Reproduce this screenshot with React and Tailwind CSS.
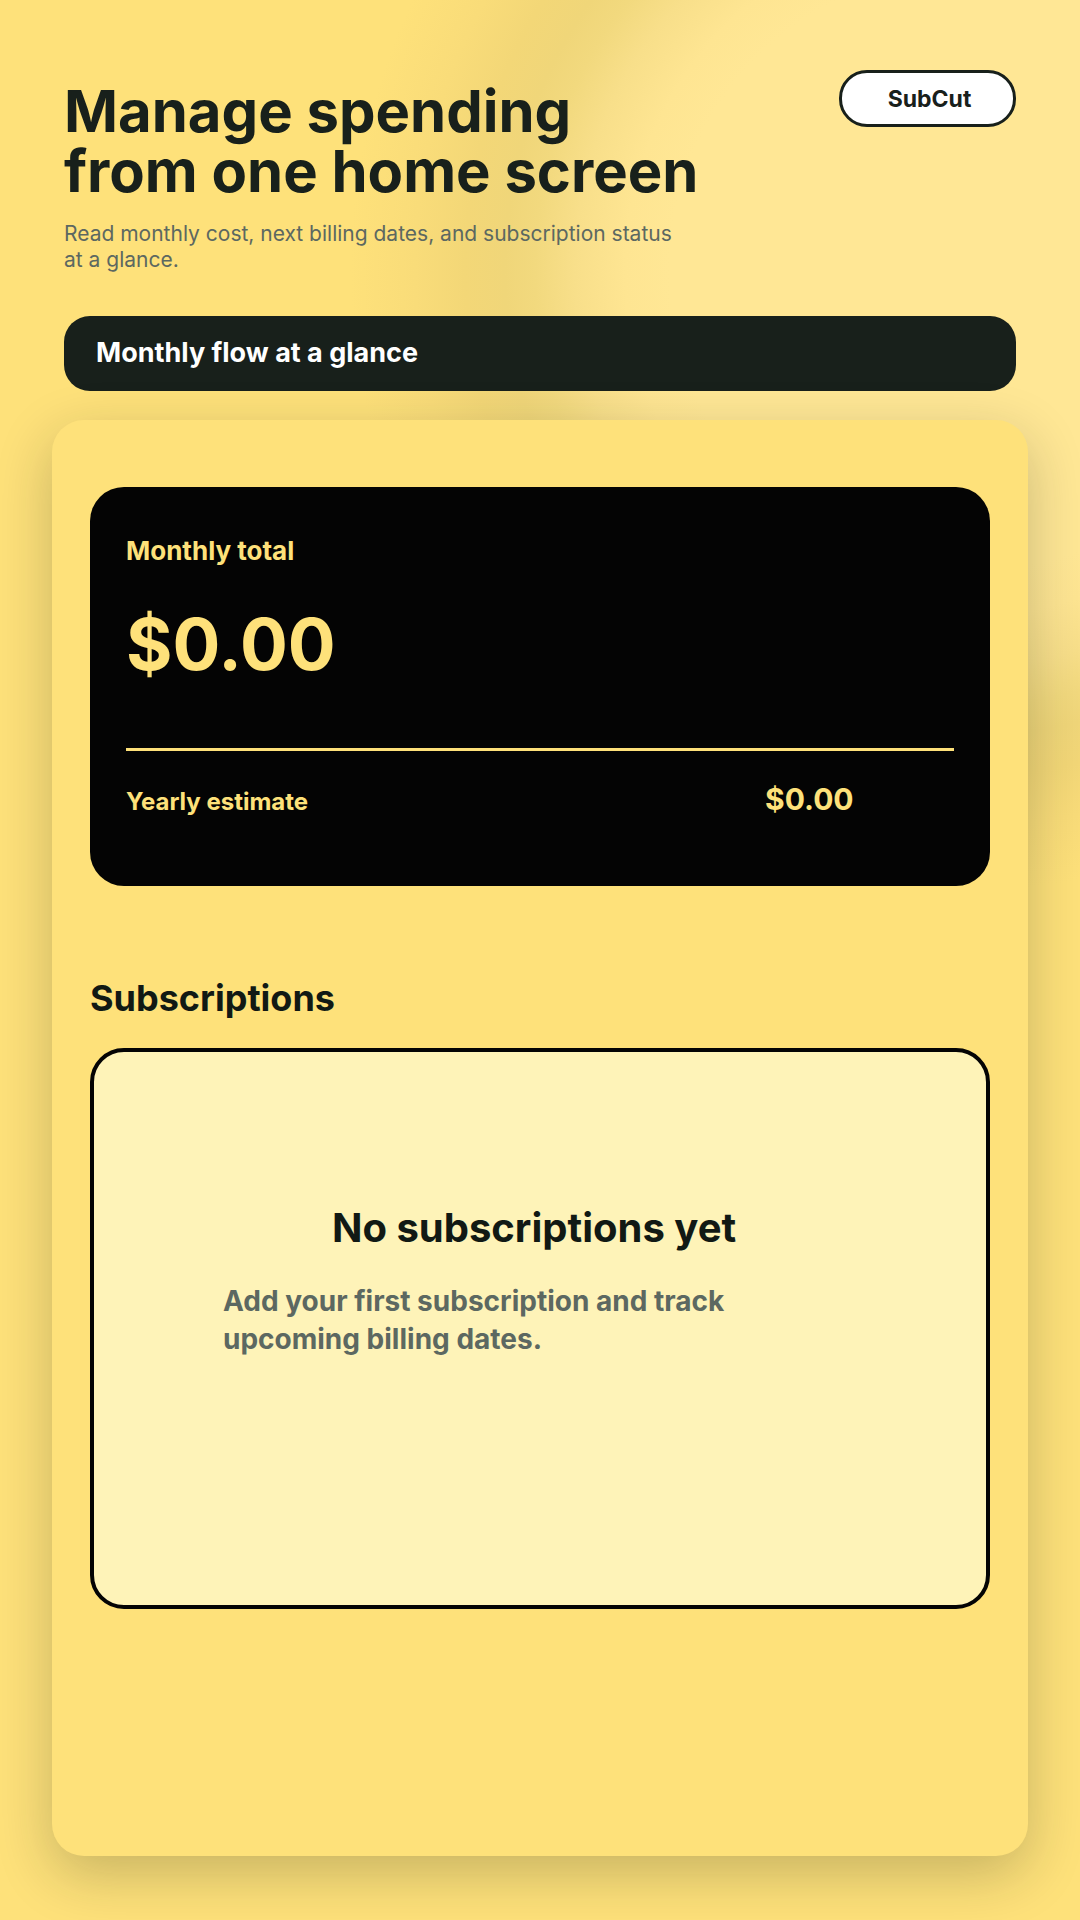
import React from "react";

const STATS = {
  monthly: "$0.00",
  yearly: "$0.00",
};

const Header = () => (
  <header className="flex items-start justify-between px-3">
    <div>
      <h1 className="pt-[11px] text-[58px] leading-[60px] font-bold">
        Manage spending
        <br />
        from one home screen
      </h1>
      <p className="mt-5 max-w-[620px] text-[21px] leading-[26px] text-[#5c6861]">
        Read monthly cost, next billing dates, and subscription status at a glance.
      </p>
    </div>
    <span className="flex h-[57px] w-[177px] shrink-0 items-center justify-center rounded-[28px] border-3 border-[#18201b] bg-white pt-0.5 pl-1 text-[23px] font-bold">
      SubCut
    </span>
  </header>
);

const TotalCard = () => (
  <section className="rounded-[34px] bg-[#040404] px-9 pt-12 pb-[68px] font-bold text-[#fee17a]">
    <h2 className="text-[26px] leading-8">Monthly total</h2>
    <p className="mt-[33px] text-[71px] leading-[88px]">{STATS.monthly}</p>
    <div className="mt-[60px] grid grid-cols-[1fr_189px] items-baseline border-t-3 border-[#fee17a] pt-8">
      <span className="text-[24px] leading-8">Yearly estimate</span>
      <span className="text-[30px] leading-8">{STATS.yearly}</span>
    </div>
  </section>
);

const EmptyState = () => (
  <div className="mt-[26px] h-[561px] rounded-[34px] border-4 border-[#040404] bg-[#fef3b8] pt-[150px]">
    <h3 className="pr-3 text-center text-[40px] leading-[52px] font-bold text-[#111914]">No subscriptions yet</h3>
    <p className="mx-auto mt-7 max-w-[634px] pr-[90px] text-[28px] leading-[38px] font-bold text-[#5c6861]">
      Add your first subscription and track upcoming billing dates.
    </p>
  </div>
);

export default function App() {
  return (
    <main className="relative isolate flex min-h-screen flex-col overflow-hidden bg-[#fee17a] px-[52px] pt-[70px] pb-16 font-['Inter',sans-serif] text-[#18201b]">
      {/* soft glow in the top right corner */}
      <div className="absolute -top-[350px] -right-[510px] -z-10 size-[1240px] rounded-full bg-[radial-gradient(closest-side,#ffe795_300px,#fee592_345px,#f8df8a_395px,#f2d97e_435px,#f0d679_465px,#f3d777_505px,#f9dc79_555px,#fee17a_620px)]"></div>
      <Header />
      <div className="mx-3 mt-[43px] rounded-[26px] bg-[#18201b] px-8 pt-[19px] pb-[21px] text-[27px] leading-[35px] font-bold text-white">
        Monthly flow at a glance
      </div>
      <div className="mt-[29px] flex-1 rounded-[32px] bg-[#fee17a] px-[38px] pt-[67px] shadow-[0_18px_56px_rgba(24,32,27,0.24)]">
        <TotalCard />
        <h2 className="mt-[88px] text-[36px] leading-[48px] font-bold text-[#111914]">Subscriptions</h2>
        <EmptyState />
      </div>
    </main>
  );
}
